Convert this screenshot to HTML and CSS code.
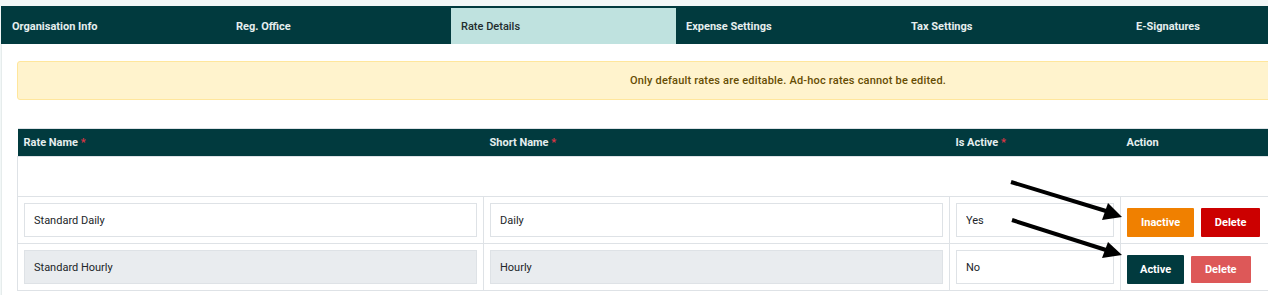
FILE: index.html
```html
<!DOCTYPE html>
<html lang="en">
  <head>
    <meta charset="UTF-8" />
    <meta name="viewport" content="width=device-width, initial-scale=1.0" />
    <title>Organisation Settings - Rate Details</title>
    <link rel="stylesheet" href="styles.css">
  </head>
  <body>
    <div class="page">
      <!-- Settings tabs -->
      <nav class="tabs">
        <a class="tab">Organisation Info</a>
        <a class="tab">Reg. Office</a>
        <a class="tab active">Rate Details</a>
        <a class="tab">Expense Settings</a>
        <a class="tab">Tax Settings</a>
        <a class="tab">E-Signatures</a>
      </nav>

      <div class="panel">
        <div class="alert">Only default rates are editable. Ad-hoc rates cannot be edited.</div>

        <table class="rates">
          <colgroup>
            <col class="col-name" />
            <col class="col-short" />
            <col class="col-active" />
            <col class="col-action" />
          </colgroup>
          <thead>
            <tr>
              <th>Rate Name <span class="req">*</span></th>
              <th>Short Name <span class="req">*</span></th>
              <th>Is Active <span class="req">*</span></th>
              <th>Action</th>
            </tr>
          </thead>
          <tbody>
            <tr class="empty-row">
              <td colspan="4"></td>
            </tr>
            <tr>
              <td><input class="field" type="text" value="Standard Daily" /></td>
              <td><input class="field" type="text" value="Daily" /></td>
              <td><input class="field" type="text" value="Yes" /></td>
              <td class="actions">
                <button class="btn btn-warning">Inactive</button>
                <button class="btn btn-danger">Delete</button>
              </td>
            </tr>
            <tr>
              <td><input class="field" type="text" value="Standard Hourly" readonly /></td>
              <td><input class="field" type="text" value="Hourly" readonly /></td>
              <td><input class="field" type="text" value="No" /></td>
              <td class="actions">
                <button class="btn btn-dark">Active</button>
                <button class="btn btn-danger" disabled>Delete</button>
              </td>
            </tr>
          </tbody>
        </table>
      </div>

      <!-- annotation arrows drawn over the screenshot -->
      <svg class="annotations" width="1268" height="295" viewBox="0 0 1268 295">
        <line x1="1011" y1="182" x2="1106" y2="211" stroke="#000" stroke-width="4" />
        <polygon points="1122,217 1108,203 1102,220" fill="#000" />
        <line x1="1012" y1="220" x2="1106" y2="250" stroke="#000" stroke-width="4" />
        <polygon points="1122,255 1108,242 1102,258" fill="#000" />
      </svg>
    </div>
  </body>
</html>
```

FILE: styles.css
```css
/* Base */
:root {
  --brand: #013a3e;
  --brand-light: #bfe2df;
  --line: #dee2e6;
  --text: #212529;
}

html,
body {
  margin: 0;
  overflow: hidden;
}

body {
  background: #f2f7f7;
  font-family: Roboto, "Liberation Sans", sans-serif;
  font-size: 11px;
  color: var(--text);
}

.page {
  position: relative;
  width: 1580px;
  padding: 6px 0 0 1px;
}

/* Tabs */
.tabs {
  display: flex;
  height: 38px;
  padding-top: 2px;
  box-sizing: border-box;
  background: var(--brand);
}

.tab {
  width: 225px;
  padding: 0 10px;
  box-sizing: border-box;
  display: flex;
  align-items: center;
  color: #e6eeee;
  font-weight: 700;
  cursor: pointer;
}

.tab:first-child {
  padding-left: 11px;
}

.tab.active {
  background: var(--brand-light);
  color: #1f2d2e;
  font-weight: 500;
}

/* Panel */
.panel {
  background: #fff;
  border-left: 1px solid #e6ecec;
  padding: 17px 0 5px 15px;
}

.alert {
  width: 1542px;
  height: 39px;
  box-sizing: border-box;
  line-height: 37px;
  text-align: center;
  background: #fff3cd;
  border: 1px solid #ffe69c;
  border-radius: 3px;
  color: #664d03;
  font-weight: 500;
  letter-spacing: 0.2px;
}

/* Table */
.rates {
  margin-top: 28px;
  width: 1542px;
  table-layout: fixed;
  border-collapse: collapse;
  border-top: 1px solid var(--line);
}

.col-name,
.col-short {
  width: 466px;
}

.col-active {
  width: 171px;
}

.rates th {
  height: 27px;
  padding: 0 6px;
  text-align: left;
  background: var(--brand);
  color: #e6eeee;
  font-weight: 700;
}

.req {
  color: #dc3545;
}

.rates td {
  padding: 6px;
  border: 1px solid var(--line);
  vertical-align: top;
}

.empty-row td {
  height: 27px;
}

.field {
  display: block;
  width: 100%;
  height: 34px;
  box-sizing: border-box;
  padding: 0 9px;
  border: 1px solid var(--line);
  font-family: inherit;
  font-size: 11px;
  color: var(--text);
  background: #fff;
}

.field[readonly] {
  background: #e9ecef;
}

.rates td.actions {
  padding: 11px 6px 0;
}

/* Buttons */
.btn {
  height: 29px;
  padding: 0 14px;
  margin-right: 4px;
  border: none;
  border-radius: 1px;
  font-family: inherit;
  font-size: 11px;
  font-weight: 700;
  color: #fff;
  cursor: pointer;
}

.btn-warning {
  background: #f08000;
}

.btn-danger {
  background: #cc0000;
}

.btn-dark {
  background: var(--brand);
  padding: 0 13px;
}

.btn:disabled {
  opacity: 0.65;
  height: 27px;
}

/* Annotation overlay */
.annotations {
  position: absolute;
  top: 0;
  left: 0;
  pointer-events: none;
}
```
